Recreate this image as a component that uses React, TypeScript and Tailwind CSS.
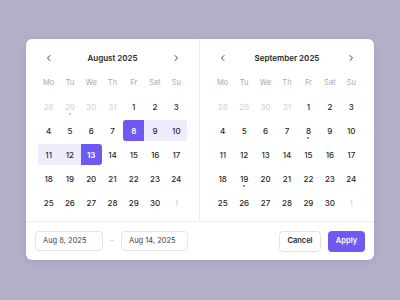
import React from "react";

type Day = { n: number; muted?: boolean; dot?: "gray" | "purple" };

const WEEKDAYS = ["Mo", "Tu", "We", "Th", "Fr", "Sat", "Su"];

function buildMonth(lead: number[], total: number, trail: number[], dots: Record<number, "gray" | "purple">, leadDots: Record<number, "gray" | "purple"> = {}): Day[] {
  const days: Day[] = [];
  lead.forEach((n) => days.push({ n, muted: true, dot: leadDots[n] }));
  for (let i = 1; i <= total; i++) days.push({ n: i, dot: dots[i] });
  trail.forEach((n) => days.push({ n, muted: true }));
  return days;
}

// matches the design: last row of August ends on 30 then a muted 1
const august = buildMonth([28, 29, 30, 31], 30, [1], {}, { 29: "gray" });
const september = buildMonth([28, 29, 30, 31], 30, [1], { 8: "purple", 19: "purple" });

function Chevron({ dir }: { dir: "left" | "right" }) {
  return (
    <svg width="8" height="8" viewBox="0 0 8 8" fill="none" stroke="#3f3f46" strokeWidth="1" strokeLinecap="round" strokeLinejoin="round">
      {dir === "left" ? <path d="M5 1.5 2.5 4 5 6.5" /> : <path d="M3 1.5 5.5 4 3 6.5" />}
    </svg>
  );
}

function Month({ title, days, range, border }: { title: string; days: Day[]; range?: { start: number; end: number }; border?: boolean }) {
  return (
    <div className={`w-[174px] pt-[12px] pb-[8px] px-[12px] ${border ? "border-r border-[#ececef]" : ""}`}>
      <div className="flex items-center justify-between h-[14px]">
        <div className="w-[21px] flex justify-center">
          <Chevron dir="left" />
        </div>
        <div className="text-[8px] font-semibold text-[#27272a]">{title}</div>
        <div className="w-[21px] flex justify-center">
          <Chevron dir="right" />
        </div>
      </div>
      <div className="grid grid-cols-7 mt-[8px] gap-y-[3px]">
        {WEEKDAYS.map((w) => (
          <div key={w} className="h-[20px] flex items-center justify-center text-[7.5px] text-[#a8a8b0]">
            {w}
          </div>
        ))}
        {days.map((d, i) => {
          let cls = "text-[#27272a]";
          let bg = "";
          if (d.muted) cls = "text-[#d4d4d8]";
          if (range && !d.muted && d.n >= range.start && d.n <= range.end) {
            if (d.n === range.start) {
              bg = "bg-[#6e5af2] rounded-l-[3px]";
              cls = "text-white font-semibold";
            } else if (d.n === range.end) {
              bg = "bg-[#6e5af2] rounded-r-[3px]";
              cls = "text-white font-semibold";
            } else {
              bg = "bg-[#efecfe]";
            }
          }
          return (
            <div key={i} className={`relative h-[21px] flex items-center justify-center text-[8px] font-medium ${cls} ${bg}`}>
              {d.n}
              {d.dot && (
                <span
                  className={`absolute bottom-[2px] left-1/2 -translate-x-1/2 w-[2px] h-[2px] rounded-full ${
                    d.dot === "gray" ? "bg-[#b4b4bb]" : "bg-[#6e5af2]"
                  }`}
                />
              )}
            </div>
          );
        })}
      </div>
    </div>
  );
}

export default function App() {
  return (
    <div className="w-[400px] h-[300px] bg-[#b4afc9] flex items-start justify-center pt-[39px]" style={{ fontFamily: "Inter, 'Noto Sans', sans-serif" }}>
      <div className="w-[348px] bg-white rounded-[6px] shadow-[0_2px_6px_rgba(40,30,80,0.12)] overflow-hidden">
        <div className="flex">
          <Month title="August 2025" days={august} range={{ start: 8, end: 13 }} border />
          <Month title="September 2025" days={september} />
        </div>
        <div className="border-t border-[#ececef] h-[39px] px-[9px] flex items-center">
          <div className="w-[68px] h-[20px] border border-[#e4e4e7] rounded-[4px] flex items-center pl-[7px] text-[7.5px] text-[#3f3f46]">
            Aug 8, 2025
          </div>
          <div className="w-[18px] text-center text-[7px] text-[#c4c4cc]">–</div>
          <div className="w-[67px] h-[20px] border border-[#e4e4e7] rounded-[4px] flex items-center pl-[7px] text-[7.5px] text-[#3f3f46]">
            Aug 14, 2025
          </div>
          <div className="ml-auto flex items-center gap-[7px]">
            <button className="w-[42px] h-[21px] border border-[#e4e4e7] rounded-[4px] text-[7.5px] font-semibold text-[#27272a] bg-white">
              Cancel
            </button>
            <button className="w-[37px] h-[21px] rounded-[4px] text-[7.5px] font-semibold text-white bg-[#6e5af2]">
              Apply
            </button>
          </div>
        </div>
      </div>
    </div>
  );
}
